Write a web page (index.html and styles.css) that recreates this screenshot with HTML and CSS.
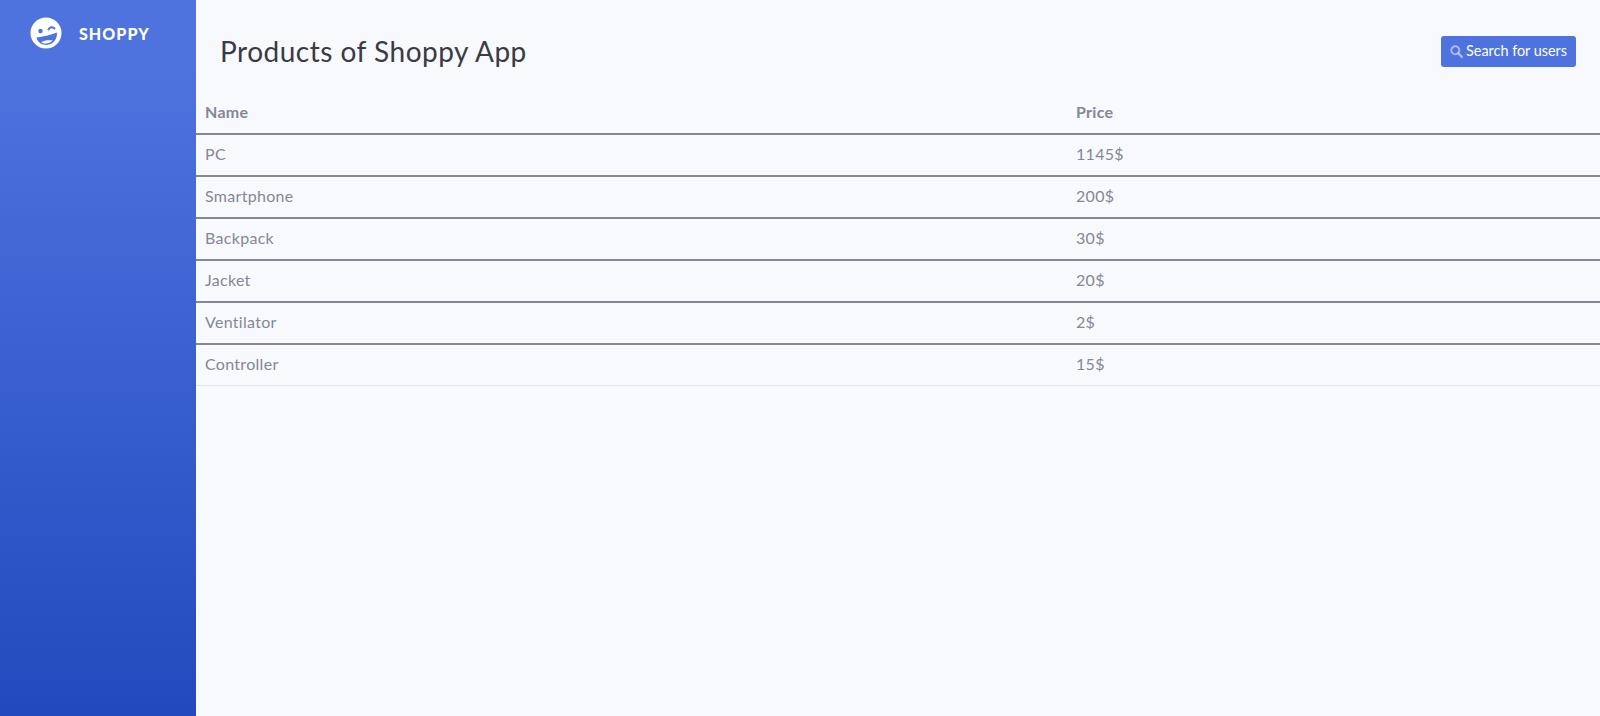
FILE: index.html
```html
<!DOCTYPE html>
<html>
<head>
    <title>Shoppy</title>
    <link rel="stylesheet" href="styles.css">
</head>
<body>
  <div class="wrapper">
    <div class="sidebar">
      <a class="brand" href="#">
        <svg class="brand-icon" viewBox="0 0 32 32">
          <circle cx="16" cy="16" r="15.5" fill="#fff"/>
          <circle cx="10.5" cy="14" r="2.2" fill="#4e73df"/>
          <path d="M18.5 12.5 C19.5 10 22.5 9.5 24.5 11.5" fill="none" stroke="#4e73df" stroke-width="2" stroke-linecap="round"/>
          <path d="M6.5 20.5 C13 20 20.5 18 26.8 15.5 C27.8 21.5 23.5 27 17.5 27.8 C12 28.4 7.5 25.5 6.5 20.5 Z" fill="#4e73df"/>
          <path d="M11 25.3 C14.5 23 19 22.7 22.8 23.6 C19.5 27 14.5 27.5 11 25.3 Z" fill="#fff"/>
        </svg>
        <span class="brand-text">SHOPPY</span>
      </a>
    </div>
    <div class="content">
      <div class="page-heading">
        <h1 class="page-title">Products of Shoppy App</h1>
        <a class="search-btn" href="#">
          <svg class="search-icon" viewBox="0 0 14 14">
            <circle cx="5.7" cy="5.7" r="4.3" fill="none" stroke="currentColor" stroke-width="2.1"/>
            <path d="M9 9 L12.8 12.8" stroke="currentColor" stroke-width="2.4" stroke-linecap="round"/>
          </svg>
          Search for users
        </a>
      </div>
      <table class="products">
        <thead>
          <tr><th class="col-name">Name</th><th>Price</th></tr>
        </thead>
        <tbody>
          <tr><td>PC</td><td>1145$</td></tr>
          <tr><td>Smartphone</td><td>200$</td></tr>
          <tr><td>Backpack</td><td>30$</td></tr>
          <tr><td>Jacket</td><td>20$</td></tr>
          <tr><td>Ventilator</td><td>2$</td></tr>
          <tr><td>Controller</td><td>15$</td></tr>
        </tbody>
      </table>
    </div>
  </div>
</body>
</html>
```

FILE: styles.css
```css
/* page */
html, body {
    height: 100%;
}

body {
    margin: 0;
    background-color: #f8f9fd;
    color: #858796;
    font-family: Lato, "Noto Sans", Arial, sans-serif;
    font-size: 16px;
    line-height: 24px;
}

.wrapper {
    display: flex;
    height: 100%;
}

/* sidebar */
.sidebar {
    flex: 0 0 196px;
    background-image: linear-gradient(180deg, #4e73df 10%, #224abe 100%);
}

.brand {
    display: flex;
    align-items: center;
    height: 34px;
    padding: 16px 0 0 30px;
    color: #fff;
    text-decoration: none;
}

.brand-icon {
    width: 32px;
    height: 32px;
}

.brand-text {
    margin-left: 17px;
    padding-top: 1px;
    font-size: 16px;
    font-weight: 900;
    letter-spacing: 1.05px;
}

/* main column */
.content {
    flex: 1;
}

.page-heading {
    display: flex;
    justify-content: space-between;
    align-items: center;
    height: 93px;
    padding: 9px 24px 0 24px;
    box-sizing: border-box;
}

.page-title {
    margin: 0;
    color: #3a3b45;
    font-size: 28px;
    font-weight: 400;
    line-height: 34px;
    letter-spacing: 0.5px;
}

.search-btn {
    display: flex;
    align-items: center;
    height: 31px;
    padding: 0 9px;
    border-radius: 3px;
    background-color: #4e73df;
    color: #fff;
    font-size: 14.4px;
    text-decoration: none;
}

.search-icon {
    width: 13px;
    height: 13px;
    margin-right: 3px;
    color: rgba(255, 255, 255, 0.5);
}

/* table */
.products {
    width: 100%;
    border-collapse: collapse;
}

.products th, .products td {
    padding: 7px 9px 9px;
    text-align: left;
    font-size: 16px;
    letter-spacing: 0.3px;
    border-bottom: 2px solid #858796;
}

.products th {
    font-weight: 700;
}

.products tbody tr:last-child td {
    border-bottom: 1px solid #e3e6f0;
}

.col-name {
    width: 853px;
}
```
